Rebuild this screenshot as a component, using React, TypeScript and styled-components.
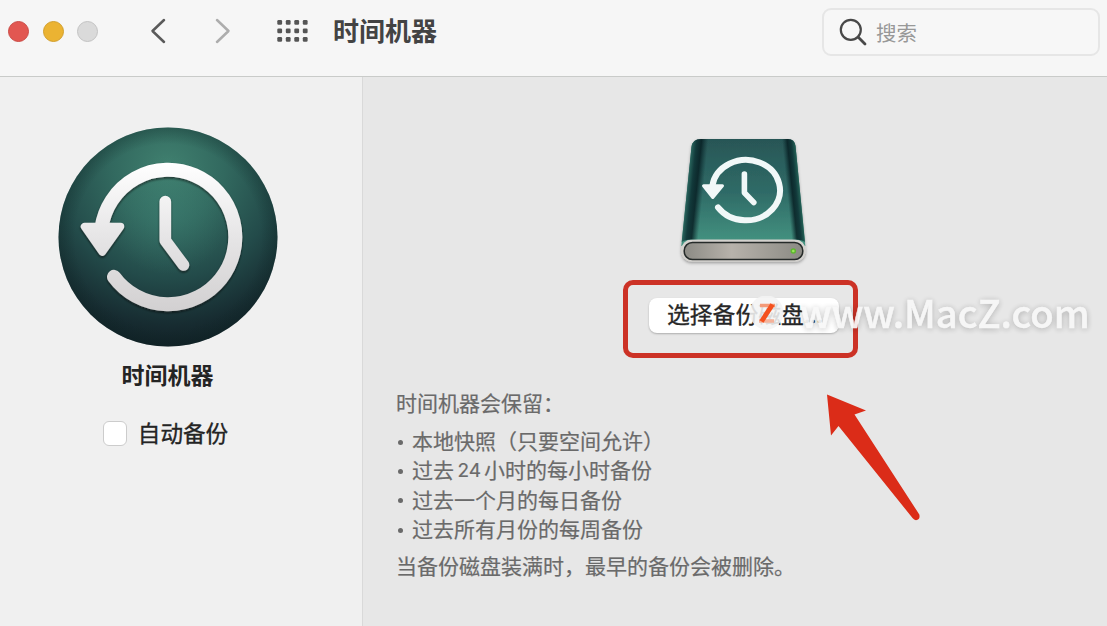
import React from "react";
import styled, { createGlobalStyle } from "styled-components";

const GlobalStyle = createGlobalStyle`
  *, *::before, *::after { box-sizing: border-box; }
  body {
    margin: 0;
    overflow: hidden;
    font-family: "Noto Sans CJK SC", sans-serif;
  }
`;

const Window = styled.div`
  position: relative;
  display: flex;
  flex-direction: column;
  width: 1107px;
  height: 626px;
  background: #e7e7e7;
`;

const Toolbar = styled.header`
  display: flex;
  align-items: flex-start;
  height: 77px;
  padding: 8px 7px 0 8px;
  background: #f6f6f6;
  border-bottom: 1px solid #c9cbc9;
`;

const TrafficLights = styled.div`
  display: flex;
  gap: 13.5px;
  padding-top: 13px;
`;

const Light = styled.span<{ $fill: string; $edge: string }>`
  width: 21px;
  height: 21px;
  border-radius: 50%;
  background: ${(p) => p.$fill};
  border: 1px solid ${(p) => p.$edge};
`;

const NavGroup = styled.nav`
  display: flex;
  gap: 47px;
  margin: 9px 0 0 51.5px;
`;

const GridIcon = styled.svg`
  margin: 12px 0 0 46px;
`;

const Title = styled.h1`
  margin: 3px 0 0 25.5px;
  font-size: 26px;
  line-height: 38px;
  font-weight: 700;
  color: #434343;
`;

const Search = styled.div`
  display: flex;
  align-items: center;
  width: 278px;
  height: 48px;
  margin-left: auto;
  padding-left: 15px;
  gap: 8px;
  border: 2px solid #e6e6e6;
  border-radius: 9px;
  background: #f7f7f7;
  color: #989898;
  font-size: 20.5px;
`;

const Body = styled.div`
  display: flex;
  flex: 1;
`;

const Sidebar = styled.aside`
  display: flex;
  flex-direction: column;
  align-items: center;
  width: 363px;
  padding: 48px 27px 0 0;
  background: #f0f0f0;
  border-right: 1px solid #d9d9d9;
`;

const AppName = styled.h2`
  margin: 8px 0 0;
  font-size: 23px;
  line-height: 34px;
  font-weight: 700;
  color: #242424;
`;

const CheckRow = styled.label`
  display: flex;
  align-items: center;
  gap: 11px;
  margin: 25px 4px 0 0;
  font-size: 22.6px;
  line-height: 34px;
  color: #242424;
  -webkit-text-stroke: 0.35px #242424;
`;

const CheckBox = styled.span`
  width: 24px;
  height: 25px;
  border: 1px solid #cccccc;
  border-radius: 6px;
  background: #ffffff;
`;

const Content = styled.main`
  display: flex;
  flex-direction: column;
  flex: 1;
  padding: 53px 0 0 34px;
`;

const DiskArea = styled.div`
  display: flex;
  flex-direction: column;
  align-items: center;
  width: 234px;
  margin-left: 226px;
`;

const Highlight = styled.div`
  display: flex;
  justify-content: center;
  width: 235px;
  height: 78px;
  margin-top: 9px;
  padding-top: 13px;
  padding-left: 8px;
  border: 5px solid #cc3226;
  border-radius: 10px;
`;

const DiskButton = styled.button`
  width: 190px;
  height: 35px;
  padding: 0 0 4px 18px;
  border: 0;
  border-radius: 8px;
  background: #ffffff;
  box-shadow: 0 1px 2px rgba(0, 0, 0, 0.25);
  font-family: inherit;
  font-size: 22.8px;
  line-height: 31px;
  text-align: left;
  white-space: nowrap;
  color: #262626;
  -webkit-text-stroke: 0.3px #262626;
`;

const Notes = styled.section`
  margin: 28px 0 0 -1px;
  font-size: 21px;
  color: #6a6a6a;
  -webkit-text-stroke: 0.2px #6a6a6a;
`;

const Line = styled.p`
  margin: 0;
  line-height: 32px;
`;

const Retention = styled.ul`
  margin: 8px 0 5.5px;
  padding: 0;
  list-style: none;
`;

const RetentionItem = styled.li`
  display: flex;
  align-items: center;
  height: 29.4px;
  line-height: 29.4px;

  &::before {
    content: "";
    width: 5px;
    height: 5px;
    margin: 3px 9px 0 2px;
    border-radius: 50%;
    background: #6a6a6a;
  }
`;

const Digits = styled.span`
  margin: 2px 3px 0 3.5px;
  font-family: Inter, sans-serif;
  font-size: 19px;
`;

const Pointer = styled.svg`
  position: absolute;
  left: 820px;
  top: 390px;
`;

const Watermark = styled.div`
  position: absolute;
  left: 748px;
  top: 290px;
  display: flex;
  align-items: center;
  height: 48px;
`;

const WatermarkText = styled.span`
  margin: -4px 0 0 16px;
  font-size: 38.2px;
  line-height: 48px;
  font-weight: 500;
  color: #f8f8f8;
  -webkit-text-stroke: 0.5px #f8f8f8;
  text-shadow: 0 1px 6px rgba(0, 0, 0, 0.3);
  opacity: 0.93;
`;

const AppIcon = () => (
  <svg width="224" height="224" viewBox="56 125.5 224 224">
    <defs>
      <radialGradient id="disc" gradientUnits="userSpaceOnUse" cx="168" cy="168" r="185">
        <stop offset="0" stopColor="#40806f" />
        <stop offset="0.3" stopColor="#32695f" />
        <stop offset="0.6" stopColor="#234b4a" />
        <stop offset="0.85" stopColor="#172c31" />
        <stop offset="1" stopColor="#101d23" />
      </radialGradient>
      <radialGradient id="glow" gradientUnits="userSpaceOnUse" cx="168" cy="215" r="60">
        <stop offset="0" stopColor="#3f8578" stopOpacity="0.4" />
        <stop offset="1" stopColor="#3f8578" stopOpacity="0" />
      </radialGradient>
      <radialGradient id="rim" gradientUnits="userSpaceOnUse" cx="168" cy="237.5" r="109.5">
        <stop offset="0.85" stopColor="#0c2524" stopOpacity="0" />
        <stop offset="1" stopColor="#0c2524" stopOpacity="0.3" />
      </radialGradient>
      <linearGradient id="silver" gradientUnits="userSpaceOnUse" x1="0" y1="163" x2="0" y2="312">
        <stop offset="0" stopColor="#ffffff" />
        <stop offset="0.5" stopColor="#e6e5e6" />
        <stop offset="1" stopColor="#d2d0d1" />
      </linearGradient>
      <filter id="drop" x="-20%" y="-20%" width="140%" height="140%">
        <feDropShadow dx="0" dy="1.5" stdDeviation="1.2" floodColor="#071817" floodOpacity="0.7" />
      </filter>
    </defs>
    <circle cx="168" cy="237.5" r="109.5" fill="url(#disc)" />
    <circle cx="168" cy="237.5" r="109.5" fill="url(#glow)" />
    <circle cx="168" cy="237.5" r="109.5" fill="url(#rim)" />
    <g filter="url(#drop)" stroke="url(#silver)" strokeLinecap="round" strokeLinejoin="round" fill="none">
      <path d="M101.6 228A67.2 67.2 0 1 1 114 277.3" strokeWidth="14" />
      <path d="M165.3 202V241L183.5 265.5" strokeWidth="11.6" />
      <path d="M84.5 227H120.5L102.3 252.5Z" fill="url(#silver)" strokeWidth="7.5" />
    </g>
  </svg>
);

const DriveIcon = () => (
  <svg width="134" height="141" viewBox="674 130 134 141" overflow="visible">
    <defs>
      <linearGradient id="shell" x1="0" y1="0" x2="0" y2="1">
        <stop offset="0" stopColor="#285656" />
        <stop offset="0.5" stopColor="#2f6b67" />
        <stop offset="1" stopColor="#459582" />
      </linearGradient>
      <linearGradient id="leftSide" gradientUnits="userSpaceOnUse" x1="687.5" y1="190" x2="704" y2="191.7">
        <stop offset="0" stopColor="#2c6a61" />
        <stop offset="0.3" stopColor="#123a3b" />
        <stop offset="0.6" stopColor="#071f23" stopOpacity="0.85" />
        <stop offset="1" stopColor="#0b2b2e" stopOpacity="0" />
      </linearGradient>
      <linearGradient id="rightSide" gradientUnits="userSpaceOnUse" x1="801" y1="190" x2="788" y2="191.3">
        <stop offset="0" stopColor="#246357" />
        <stop offset="0.3" stopColor="#123a3b" />
        <stop offset="0.6" stopColor="#071f23" stopOpacity="0.85" />
        <stop offset="1" stopColor="#0b2b2e" stopOpacity="0" />
      </linearGradient>
      <linearGradient id="metal" x1="0" y1="0" x2="1" y2="0">
        <stop offset="0" stopColor="#8c8b85" />
        <stop offset="0.4" stopColor="#b7b2ab" />
        <stop offset="1" stopColor="#8b8a84" />
      </linearGradient>
      <filter id="floor" x="-20%" y="-20%" width="140%" height="150%">
        <feDropShadow dx="0" dy="1.5" stdDeviation="1.5" floodColor="#000000" floodOpacity="0.35" />
      </filter>
    </defs>
    <g filter="url(#floor)">
      <path d="M702 139H789Q795.5 139 796.5 146L806.3 246H682.3L692.5 147Q693.5 139 702 139Z" fill="url(#shell)" />
      <rect x="682.3" y="239.5" width="124.2" height="22" rx="10" fill="#d4d2ce" />
    </g>
    <path d="M702 139H745V239.5H692Q686 239.5 682.7 242L692.5 147Q693.5 139 702 139Z" fill="url(#leftSide)" />
    <path d="M745 139H789Q795.5 139 796.5 146L806 242Q803 239.5 796 239.5H745Z" fill="url(#rightSide)" />
    <rect x="685.2" y="242.5" width="118.6" height="17" rx="8.2" fill="url(#metal)" stroke="#252a29" strokeWidth="1.5" />
    <circle cx="794.3" cy="251" r="2.8" fill="#5fb82f" />
    <circle cx="794.3" cy="251" r="1.3" fill="#9be65e" />
    <g stroke="#f1f8f8" strokeLinecap="round" strokeLinejoin="round" fill="none">
      <path d="M713.3 186A34 30.2 0 1 1 719 207.3" strokeWidth="6" />
      <path d="M745.4 174V192.7L754.8 202.5" strokeWidth="5.6" />
      <path d="M704.5 185.8H723.5L713.8 197.5Z" fill="#f1f8f8" strokeWidth="3" />
    </g>
  </svg>
);

const items: React.ReactNode[] = [
  "本地快照（只要空间允许）",
  <>过去<Digits>24</Digits>小时的每小时备份</>,
  "过去一个月的每日备份",
  "过去所有月份的每周备份",
];

export default function App() {
  return (
    <Window>
      <GlobalStyle />
      <Toolbar>
        <TrafficLights>
          <Light $fill="#e25751" $edge="#cb4b46" />
          <Light $fill="#ebb332" $edge="#d29f2c" />
          <Light $fill="#dadada" $edge="#c3c3c3" />
        </TrafficLights>
        <NavGroup>
          <svg width="17" height="28" viewBox="0 0 17 28" fill="none" stroke="#5a5a5a" strokeWidth="2.5" strokeLinecap="round" strokeLinejoin="round">
            <path d="M14 3L2.5 14L14 25" />
          </svg>
          <svg width="17" height="28" viewBox="0 0 17 28" fill="none" stroke="#adadad" strokeWidth="2.5" strokeLinecap="round" strokeLinejoin="round">
            <path d="M3 3L14.5 14L3 25" />
          </svg>
        </NavGroup>
        <GridIcon width="31" height="23" viewBox="0 0 31 23" fill="#555555">
          {[0, 8.5, 17].map((y) =>
            [0, 8.5, 17, 25.5].map((x) => <rect key={`${x}-${y}`} x={x + 0.3} y={y} width="4.8" height="4.8" rx="1.2" />)
          )}
        </GridIcon>
        <Title>时间机器</Title>
        <Search>
          <svg width="29" height="29" viewBox="0 0 29 29" fill="none" stroke="#484848" strokeLinecap="round">
            <circle cx="11.8" cy="11.8" r="10" strokeWidth="2.2" />
            <path d="M19.3 19.3L26 26" strokeWidth="2.8" />
          </svg>
          搜索
        </Search>
      </Toolbar>
      <Body>
        <Sidebar>
          <AppIcon />
          <AppName>时间机器</AppName>
          <CheckRow>
            <CheckBox />
            自动备份
          </CheckRow>
        </Sidebar>
        <Content>
          <DiskArea>
            <DriveIcon />
            <Highlight>
              <DiskButton>选择备份磁盘...</DiskButton>
            </Highlight>
          </DiskArea>
          <Notes>
            <Line>时间机器会保留：</Line>
            <Retention>
              {items.map((item, i) => (
                <RetentionItem key={i}>{item}</RetentionItem>
              ))}
            </Retention>
            <Line>当备份磁盘装满时，最早的备份会被删除。</Line>
          </Notes>
        </Content>
      </Body>
      <Pointer width="105" height="135" viewBox="820 390 105 135">
        <path d="M827 394.5L866 410.5L854.5 414.5L919.3 514.5Q920.5 519.5 916 520.2Q914 520 912.5 518L838.5 426L831 435.5Z" fill="#db2c18" />
      </Pointer>
      <Watermark>
        <svg width="36" height="36" viewBox="748 296 36 36">
          <circle cx="766.5" cy="312.5" r="17" fill="#f4f4f4" fillOpacity="0.88" />
          <path d="M760 305.5H775" stroke="#f49a78" strokeWidth="3.5" />
          <path d="M759 321H774" stroke="#f5b29a" strokeWidth="3.5" />
          <path d="M772.5 304.5L761.5 321.5" stroke="#f4511e" strokeWidth="4.8" />
        </svg>
        <WatermarkText>www.MacZ.com</WatermarkText>
      </Watermark>
    </Window>
  );
}
